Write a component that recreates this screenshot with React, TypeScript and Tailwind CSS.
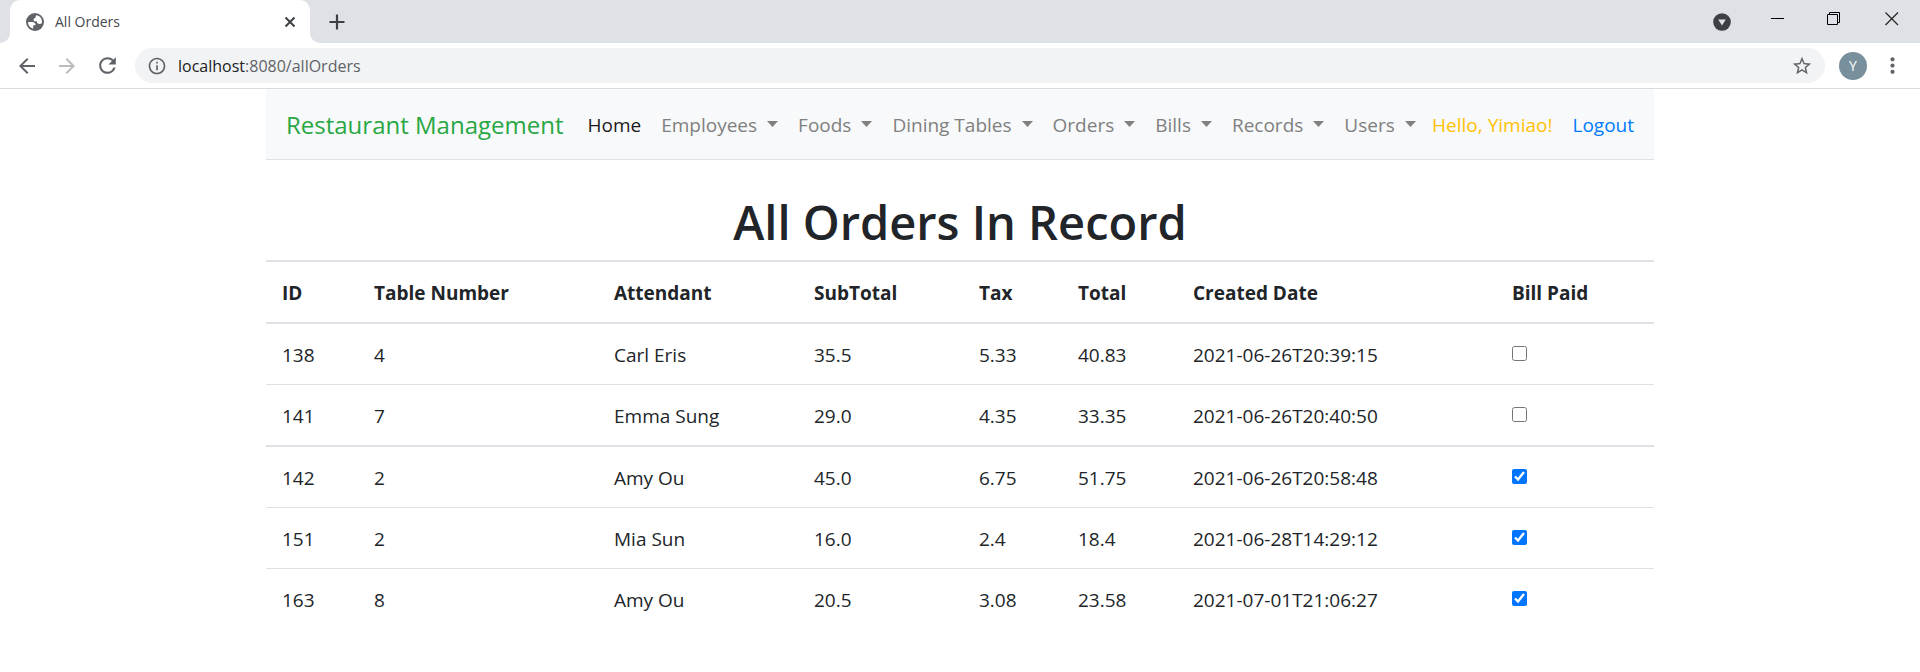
import React from "react";
import {
  MdArrowBack,
  MdArrowForward,
  MdInfoOutline,
  MdMoreVert,
  MdRefresh,
  MdStarBorder,
} from "react-icons/md";

const menus = ["Employees", "Foods", "Dining Tables", "Orders", "Bills", "Records", "Users"];

interface Order {
  id: number;
  table: number;
  attendant: string;
  subTotal: string;
  tax: string;
  total: string;
  created: string;
  paid: boolean;
}

const orders: Order[] = [
  { id: 138, table: 4, attendant: "Carl Eris", subTotal: "35.5", tax: "5.33", total: "40.83", created: "2021-06-26T20:39:15", paid: false },
  { id: 141, table: 7, attendant: "Emma Sung", subTotal: "29.0", tax: "4.35", total: "33.35", created: "2021-06-26T20:40:50", paid: false },
  { id: 142, table: 2, attendant: "Amy Ou", subTotal: "45.0", tax: "6.75", total: "51.75", created: "2021-06-26T20:58:48", paid: true },
  { id: 151, table: 2, attendant: "Mia Sun", subTotal: "16.0", tax: "2.4", total: "18.4", created: "2021-06-28T14:29:12", paid: true },
  { id: 163, table: 8, attendant: "Amy Ou", subTotal: "20.5", tax: "3.08", total: "23.58", created: "2021-07-01T21:06:27", paid: true },
];

const headings = ["ID", "Table Number", "Attendant", "SubTotal", "Tax", "Total", "Created Date", "Bill Paid"];

function Globe() {
  return (
    <svg className="size-[18px] shrink-0" viewBox="0 0 18 18" aria-hidden="true">
      <circle cx="9" cy="9" r="9" fill="#5f6368" />
      <path d="M2 9h4.2c2 0 3.400 1.100 3.400 3.200H7.200v3.500C4.200 15 2 12.400 2 9z" fill="#fff" />
      <path
        d="M10.800 2.200C9.800 2.500 9.500 3.200 9.500 4.900 7.600 5 6.800 6.700 8.200 8.200h2.700c-.1 1.400.5 2.200 1.700 2.600 1.300.5 2.500.2 3.300-.9C16.600 6.100 14.200 3 10.800 2.200z"
        fill="#fff"
      />
    </svg>
  );
}

function TabStrip() {
  return (
    <div className="flex h-[43px] items-stretch bg-[#dee1e6]">
      <svg className="h-[10px] w-[10px] self-end" viewBox="0 0 10 10" aria-hidden="true">
        <path d="M10 0v10H0A10 10 0 0 0 10 0z" fill="#fff" />
      </svg>
      <div className="flex w-[300px] items-center rounded-t-[10px] bg-white pr-3 pl-4">
        <Globe />
        <span className="ml-[11px] flex-1 text-[14px] text-[#45494d]">All Orders</span>
        <button type="button" aria-label="Close tab" className="p-0.5">
          <svg className="size-3" viewBox="0 0 12 12" stroke="#3c4043" strokeWidth="2">
            <path d="M1.5 1.5l9 9M10.5 1.5l-9 9" />
          </svg>
        </button>
      </div>
      <svg className="h-[10px] w-[10px] self-end" viewBox="0 0 10 10" aria-hidden="true">
        <path d="M0 0v10h10A10 10 0 0 1 0 0z" fill="#fff" />
      </svg>
      <button type="button" aria-label="New tab" className="ml-[7px] self-center p-0.5">
        <svg className="size-4" viewBox="0 0 16 16" stroke="#3c4043" strokeWidth="2.2">
          <path d="M8 .5v15M.5 8h15" />
        </svg>
      </button>
      <div className="ml-auto flex items-start pr-[21px]">
        <button type="button" aria-label="Search tabs" className="mt-[13px]">
          <svg className="size-[18px]" viewBox="0 0 18 18">
            <circle cx="9" cy="9" r="8.8" fill="#3c4043" />
            <path d="M5.2 6.4h7.6L9 12.4z" fill="#dee1e6" />
          </svg>
        </button>
        <button type="button" aria-label="Minimize" className="mt-3 ml-10">
          <svg className="size-[14px]" viewBox="0 0 14 14">
            <path d="M0 6h13v1H0z" fill="#000" />
          </svg>
        </button>
        <button type="button" aria-label="Restore" className="mt-3 ml-[42px]">
          <svg className="size-[14px]" viewBox="0 0 14 14" fill="none" stroke="#000" strokeWidth="1">
            <path d="M.5 2.5h10v10H.5zM2.5 2.5v-2h10v10h-2" />
          </svg>
        </button>
        <button type="button" aria-label="Close window" className="mt-3 ml-11">
          <svg className="size-[14px]" viewBox="0 0 14 14" stroke="#222" strokeWidth="1.2">
            <path d="M.5.5l12.5 12.5M13 .5L.5 13" />
          </svg>
        </button>
      </div>
    </div>
  );
}

function Toolbar() {
  return (
    <div className="flex h-[46px] items-center border-b border-[#d9dbdf] bg-white pr-[15px] pl-[15px] text-[#5f6368]">
      <button type="button" aria-label="Back"><MdArrowBack className="size-6" /></button>
      <button type="button" aria-label="Forward" className="ml-4 text-[#babcbe]"><MdArrowForward className="size-6" /></button>
      <button type="button" aria-label="Reload" className="ml-4"><MdRefresh className="size-[25px]" /></button>
      <div className="ml-[15px] flex h-[35px] flex-1 items-center rounded-full bg-[#f1f3f4] pr-3 pl-3">
        <MdInfoOutline className="size-5 shrink-0" />
        <a href="#" className="ml-[11px] text-[16px] leading-none">
          <span className="text-[#202124]">localhost</span>:8080/allOrders
        </a>
        <button type="button" aria-label="Bookmark" className="ml-auto"><MdStarBorder className="size-[22px]" /></button>
      </div>
      <button
        type="button"
        aria-label="Profile"
        className="ml-[14px] flex size-7 items-center justify-center rounded-full bg-[#78909c] text-[14px] text-white"
      >
        Y
      </button>
      <button type="button" aria-label="Menu" className="ml-[13px]"><MdMoreVert className="size-[25px]" /></button>
    </div>
  );
}

function Caret() {
  return (
    <svg className="mb-0.5 h-[6px] w-[11px] shrink-0" viewBox="0 0 11 6" fill="currentColor" aria-hidden="true">
      <path d="M0 0h11L5.5 6z" />
    </svg>
  );
}

function NavBar() {
  return (
    <nav className="flex h-[71px] items-center border-b border-[#dee2e6] bg-[#f8f9fa] px-5 pt-[2px] text-[19px] whitespace-nowrap">
      <a href="#" className="mr-[14px] text-[24px] text-[#28a745]">Restaurant Management</a>
      <a href="#" className="px-[10px] text-[#1a1a1a]">Home</a>
      {menus.map((menu) => (
        <button key={menu} type="button" className="flex items-center gap-[10px] px-[10px] text-[#808080]">
          {menu}
          <Caret />
        </button>
      ))}
      <span className="ml-auto text-[#ffc107]">Hello, Yimiao!</span>
      <a href="#" className="ml-5 text-[#007bff]">Logout</a>
    </nav>
  );
}

function OrdersTable() {
  return (
    <table className="w-full table-fixed border-separate border-spacing-0 text-left text-[19px]">
      <colgroup>
        <col className="w-[92px]" />
        <col className="w-[240px]" />
        <col className="w-[200px]" />
        <col className="w-[165px]" />
        <col className="w-[99px]" />
        <col className="w-[115px]" />
        <col className="w-[319px]" />
        <col className="w-[158px]" />
      </colgroup>
      <thead>
        <tr>
          {headings.map((heading) => (
            <th key={heading} scope="col" className="border-t-2 border-[#dee2e6] px-4 pt-4 pb-[14px] leading-[30px] font-bold">
              {heading}
            </th>
          ))}
        </tr>
      </thead>
      <tbody className="[&_td]:border-t [&_td]:border-[#dee2e6] [&_td]:px-4 [&_td]:pt-4 [&_td]:pb-[14px] [&_td]:leading-[30px] [&>tr:first-child>td]:border-t-2 [&>tr:nth-child(3)>td]:border-t-2">
        {orders.map((order) => (
          <tr key={order.id}>
            <td>{order.id}</td>
            <td>{order.table}</td>
            <td>{order.attendant}</td>
            <td>{order.subTotal}</td>
            <td>{order.tax}</td>
            <td>{order.total}</td>
            <td>{order.created}</td>
            <td>
              <label className="flex h-[30px] items-center pb-[3px]">
                <input
                  type="checkbox"
                  defaultChecked={order.paid}
                  aria-label={`Order ${order.id} bill paid`}
                  className="size-[15px] accent-[#0075ff]"
                />
              </label>
            </td>
          </tr>
        ))}
      </tbody>
    </table>
  );
}

export default function App() {
  return (
    <div className="min-h-screen bg-white font-['Open_Sans','Noto_Sans',sans-serif] text-[#212529]">
      <TabStrip />
      <Toolbar />
      <main className="mx-auto max-w-[1388px]">
        <NavBar />
        <h1 className="mt-8 mb-2 text-center text-[47px] leading-[60px] font-semibold">All Orders In Record</h1>
        <OrdersTable />
      </main>
    </div>
  );
}
